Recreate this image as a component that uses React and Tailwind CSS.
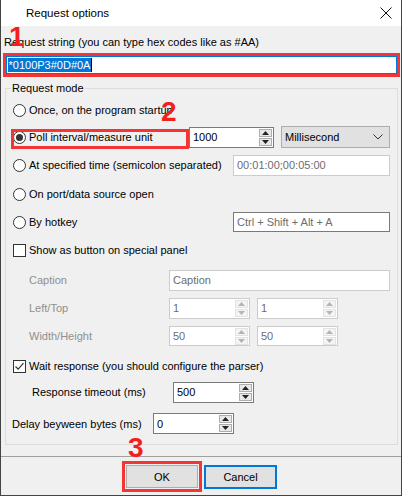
import React from 'react';

// ── Small Win32-style controls ─────────────────────
function Radio({ checked }) {
  return (
    <span className="flex h-[13px] w-[13px] shrink-0 items-center justify-center rounded-full border border-[#333333] bg-white">
      {checked && <span className="h-[7px] w-[7px] rounded-full bg-[#333333]" />}
    </span>
  );
}

function Check({ checked }) {
  return (
    <span className="flex h-[13px] w-[13px] shrink-0 items-center justify-center border border-[#333333] bg-white">
      {checked && (
        <svg width="11" height="11" viewBox="0 0 11 11">
          <path d="M1.5 5.5 L4.2 8.2 L9.5 2.2" fill="none" stroke="#333333" strokeWidth="1.2" />
        </svg>
      )}
    </span>
  );
}

function SpinBtn({ up, disabled }) {
  const c = disabled ? '#b4b4b4' : '#222222';
  return (
    <div className={`flex h-[8px] w-[13px] items-center justify-center border ${disabled ? 'border-[#e3e3e3] bg-[#f4f4f4]' : 'border-[#adadad] bg-[#e8e8e8]'}`}>
      <svg width="7" height="4" viewBox="0 0 7 4">
        <path d={up ? 'M0 4 L3.5 0 L7 4 Z' : 'M0 0 L3.5 4 L7 0 Z'} fill={c} />
      </svg>
    </div>
  );
}

function Spin({ value, className = '', disabled }) {
  return (
    <div className={`flex items-stretch bg-white border ${disabled ? 'border-[#cccccc] text-[#6d6d6d]' : 'border-[#7a7a7a] text-black'} ${className}`}>
      <div className="flex flex-1 items-center pl-[3px]">{value}</div>
      <div className="flex flex-col justify-center gap-[1px] pr-[1px]">
        <SpinBtn up disabled={disabled} />
        <SpinBtn disabled={disabled} />
      </div>
    </div>
  );
}

function Edit({ value, className = '', disabled }) {
  return (
    <div className={`flex items-center bg-white pl-[3px] text-[#6d6d6d] border ${disabled ? 'border-[#cccccc]' : 'border-[#7a7a7a]'} ${className}`}>
      {value}
    </div>
  );
}

const Mark = ({ children, className }) => (
  <div className={`absolute font-['Liberation_Sans',sans-serif] text-[28px] font-bold leading-[28px] text-[#f31f1f] ${className}`}>
    {children}
  </div>
);

export default function App() {
  return (
    <div className="relative flex h-[496px] w-[402px] flex-col border-x border-b border-[#444444] bg-[#f0f0f0] font-['Liberation_Sans',sans-serif] text-[11px] leading-[16px] text-black">
      {/* Title bar */}
      <div className="flex h-[26px] shrink-0 items-center justify-between bg-white pl-[25px] pr-[8px]">
        <span className="text-[11.5px]">Request options</span>
        <svg width="12" height="12" viewBox="0 0 12 12" className="mr-[1px]">
          <path d="M0.5 0.5 L11.5 11.5 M11.5 0.5 L0.5 11.5" stroke="#111111" strokeWidth="1" />
        </svg>
      </div>

      {/* Request string */}
      <div className="mt-[8px] pl-[3px]">Request string (you can type hex codes like as #AA)</div>
      <div className="ml-[2px] mt-[3px] h-[24px] w-[397px] border-[3px] border-[#f43535]">
        <div className="flex h-full items-center border border-[#0078d7] bg-white pl-[1px]">
          <span className="bg-[#0078d7] px-[0.5px] leading-[14px] text-white">*0100P3#0D#0A</span>
          <span className="h-[14px] w-[1px] bg-black" />
        </div>
      </div>

      {/* Request mode group */}
      <fieldset className="ml-[4px] mt-[3px] w-[393px] border border-[#dcdcdc]">
        <legend className="ml-[5px] px-[1px]">Request mode</legend>

        <div className="flex h-[28px] items-center pl-[7px]">
          <Radio />
          <span className="ml-[3px]">Once, on the program startup</span>
        </div>

        <div className="relative flex h-[26px] items-center">
          <div className="flex w-[183px] items-center pl-[7px]">
            <Radio checked />
            <span className="ml-[3px]">Poll interval/measure unit</span>
          </div>
          <Spin value="1000" className="h-[21px] w-[85px]" />
          <div className="ml-[7px] flex h-[22px] w-[109px] items-center justify-between border border-[#adadad] bg-[#e1e1e1] pl-[3px] pr-[6px]">
            <span>Millisecond</span>
            <svg width="10" height="6" viewBox="0 0 10 6">
              <path d="M0.5 0.5 L5 5 L9.5 0.5" fill="none" stroke="#333333" strokeWidth="1" />
            </svg>
          </div>
          <div className="absolute left-[5px] top-[5px] h-[20px] w-[178px] border-[3px] border-[#f43535]" />
        </div>

        <div className="flex h-[30px] items-center">
          <div className="flex w-[227px] items-center pl-[7px]">
            <Radio />
            <span className="ml-[3px]">At specified time (semicolon separated)</span>
          </div>
          <Edit value="00:01:00;00:05:00" disabled className="h-[21px] w-[157px]" />
        </div>

        <div className="flex h-[28px] items-center pl-[7px]">
          <Radio />
          <span className="ml-[3px]">On port/data source open</span>
        </div>

        <div className="flex h-[28px] items-center">
          <div className="flex w-[227px] items-center pl-[7px]">
            <Radio />
            <span className="ml-[3px]">By hotkey</span>
          </div>
          <Edit value="Ctrl + Shift + Alt + A" className="h-[20px] w-[157px]" />
        </div>

        <div className="flex h-[28px] items-center pl-[7px]">
          <Check />
          <span className="ml-[3px]">Show as button on special panel</span>
        </div>

        <div className="flex h-[32px] items-center">
          <div className="w-[163px] pl-[23px] text-[#8f8f8f]">Caption</div>
          <Edit value="Caption" disabled className="h-[21px] w-[221px]" />
        </div>

        <div className="flex h-[24px] items-center">
          <div className="w-[163px] pl-[23px] text-[#8f8f8f]">Left/Top</div>
          <Spin value="1" disabled className="h-[21px] w-[81px]" />
          <Spin value="1" disabled className="ml-[7px] h-[21px] w-[81px]" />
        </div>

        <div className="flex h-[32px] items-center">
          <div className="w-[163px] pl-[23px] text-[#8f8f8f]">Width/Height</div>
          <Spin value="50" disabled className="h-[20px] w-[81px]" />
          <Spin value="50" disabled className="ml-[7px] h-[20px] w-[81px]" />
        </div>

        <div className="flex h-[28px] items-center pl-[7px]">
          <Check checked />
          <span className="ml-[3px]">Wait response (you should configure the parser)</span>
        </div>

        <div className="flex h-[24px] items-center">
          <div className="w-[167px] pl-[26px]">Response timeout (ms)</div>
          <Spin value="500" className="h-[21px] w-[81px]" />
        </div>

        <div className="flex h-[40px] items-center pb-[1px]">
          <div className="w-[147px] pl-[6px]">Delay beyween bytes (ms)</div>
          <Spin value="0" className="h-[21px] w-[81px]" />
        </div>
      </fieldset>

      {/* Footer */}
      <div className="mt-[11px] h-[1px] bg-[#a0a0a0]" />
      <div className="mt-[4px] flex items-center">
        <div className="ml-[121px] h-[31px] w-[80px] border-[3px] border-[#f43535] p-[1px]">
          <div className="flex h-full items-center justify-center border border-[#adadad] bg-[#e1e1e1]">OK</div>
        </div>
        <div className="ml-[2px] flex h-[24px] w-[73px] items-center justify-center border-2 border-[#0078d7] bg-[#e1e1e1]">
          Cancel
        </div>
      </div>

      {/* Annotations */}
      <Mark className="left-[8px] top-[23px]">1</Mark>
      <Mark className="left-[160px] top-[98px]">2</Mark>
      <Mark className="left-[127px] top-[434px]">3</Mark>
    </div>
  );
}
